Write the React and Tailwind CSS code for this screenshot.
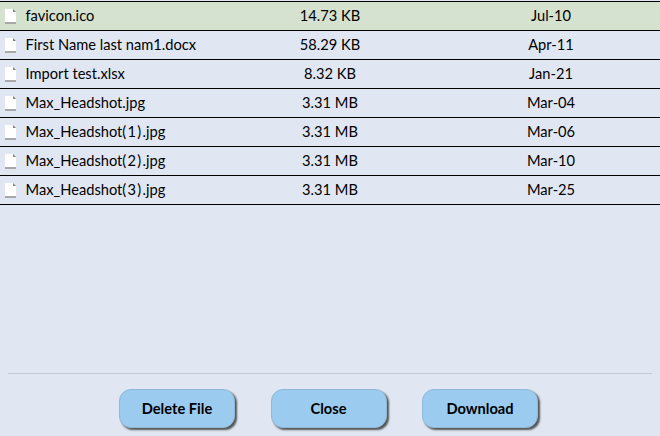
const files = [
  { name: "favicon.ico", size: "14.73 KB", date: "Jul-10" },
  { name: "First Name last nam1.docx", size: "58.29 KB", date: "Apr-11" },
  { name: "Import test.xlsx", size: "8.32 KB", date: "Jan-21" },
  { name: "Max_Headshot.jpg", size: "3.31 MB", date: "Mar-04" },
  { name: "Max_Headshot(1).jpg", size: "3.31 MB", date: "Mar-06" },
  { name: "Max_Headshot(2).jpg", size: "3.31 MB", date: "Mar-10" },
  { name: "Max_Headshot(3).jpg", size: "3.31 MB", date: "Mar-25" },
];

function FileIcon() {
  return (
    <svg width="11" height="15" viewBox="0 0 11 15" className="shrink-0 mt-px">
      <path d="M0 0H8L11 3V15H0Z" fill="#ffffff" />
      <path d="M8 0V3H11Z" fill="#808080" />
      <path d="M0 14H11" fill="none" stroke="#a8a8a8" strokeWidth="2" />
    </svg>
  );
}

// the "(1)" part sits wider in the picture than Lato sets it
function FileName({ name }) {
  return (
    <span className="whitespace-nowrap">
      {name.split(/(\(\d\))/).map((part, i) =>
        i % 2 === 1 ? (
          <span key={i} className="tracking-[1.3px]">
            {part}
          </span>
        ) : (
          part
        )
      )}
    </span>
  );
}

function ActionButton({ children }) {
  return (
    <button className="w-[116px] h-[39px] rounded-[12px] bg-[#9ccbf0] text-[14.67px] font-bold text-black border border-[#8fb8d8] shadow-[2px_2px_2px_#555555]">
      {children}
    </button>
  );
}

export default function App() {
  return (
    <div className="w-[660px] h-[436px] bg-[#e0e7f3] flex flex-col overflow-hidden font-['Lato',sans-serif] text-[14.67px] text-black">
      <div className="pt-px">
        {files.map((file, i) => (
          <div
            key={file.name}
            className={`h-[29px] grid grid-cols-[220px_220px_220px] items-center pb-px border-b border-black ${i === 0 ? "bg-[#d5e2cf] border-t h-[30px]" : ""}`}
          >
            <div className="flex items-center gap-[9.5px] pl-[5px]">
              <FileIcon />
              <FileName name={file.name} />
            </div>
            <div className="text-center">{file.size}</div>
            <div className="text-center pl-[2px]">{file.date}</div>
          </div>
        ))}
      </div>
      <div className="flex-1" />
      <div className="mx-2 h-px bg-[#c5cad6]" />
      <div className="h-[62px] flex justify-center gap-[35.5px] pt-[15px] pr-[3px]">
        <ActionButton>Delete File</ActionButton>
        <ActionButton>Close</ActionButton>
        <ActionButton>Download</ActionButton>
      </div>
    </div>
  );
}
